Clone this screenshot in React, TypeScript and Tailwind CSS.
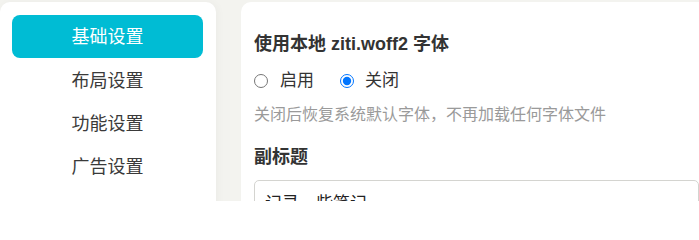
const MENU = ['基础设置', '布局设置', '功能设置', '广告设置'];

const font = "font-['Liberation_Sans','Noto_Sans_CJK_SC',sans-serif]";

export default function App() {
  return (
    <div className={`${font} flex h-[201px] w-[699px] items-start overflow-hidden bg-[#f3f3ef] pt-[2px]`}>
      <aside className="h-[240px] w-[216px] shrink-0 rounded-[10px] bg-white pl-[12px] pr-[13px] pt-[13px] shadow-[2px_0_8px_rgba(0,0,0,0.03)]">
        <nav className="flex flex-col">
          {MENU.map((label, i) => (
            <button
              key={label}
              className={
                i === 0
                  ? 'h-[43px] rounded-[8px] bg-[#00bcd4] pt-[1px] text-[18px] text-white'
                  : 'h-[43px] rounded-[8px] pt-[3px] text-[18px] text-[#3a3a3a]'
              }
            >
              {label}
            </button>
          ))}
        </nav>
      </aside>

      <main className="ml-[25px] h-[240px] flex-1 rounded-l-[10px] bg-white pl-[13px] pt-[29px]">
        <h3 className="text-[18px] font-bold leading-[26px] text-[#333]">使用本地 ziti.woff2 字体</h3>

        <div className="mt-[11px] flex h-[26px] items-center text-[17px] text-[#333]">
          <label className="flex items-center">
            <input type="radio" name="ziti" className="m-0 h-[14px] w-[14px] accent-[#0075ff]" />
            <span className="ml-[12px]">启用</span>
          </label>
          <label className="ml-[26px] flex items-center">
            <input type="radio" name="ziti" defaultChecked className="m-0 h-[14px] w-[14px] accent-[#0075ff]" />
            <span className="ml-[11px]">关闭</span>
          </label>
        </div>

        <p className="mt-[9px] text-[16px] leading-[24px] text-[#9a9a9a]">关闭后恢复系统默认字体，不再加载任何字体文件</p>

        <h3 className="mt-[17px] text-[18px] font-bold leading-[26px] text-[#333]">副标题</h3>

        <input
          defaultValue="记录一些笔记"
          className="mt-[10px] h-[42px] w-full rounded-[5px] border border-[#d4d4d0] px-[10px] text-[17px] text-[#222] outline-none"
        />
      </main>
    </div>
  );
}
